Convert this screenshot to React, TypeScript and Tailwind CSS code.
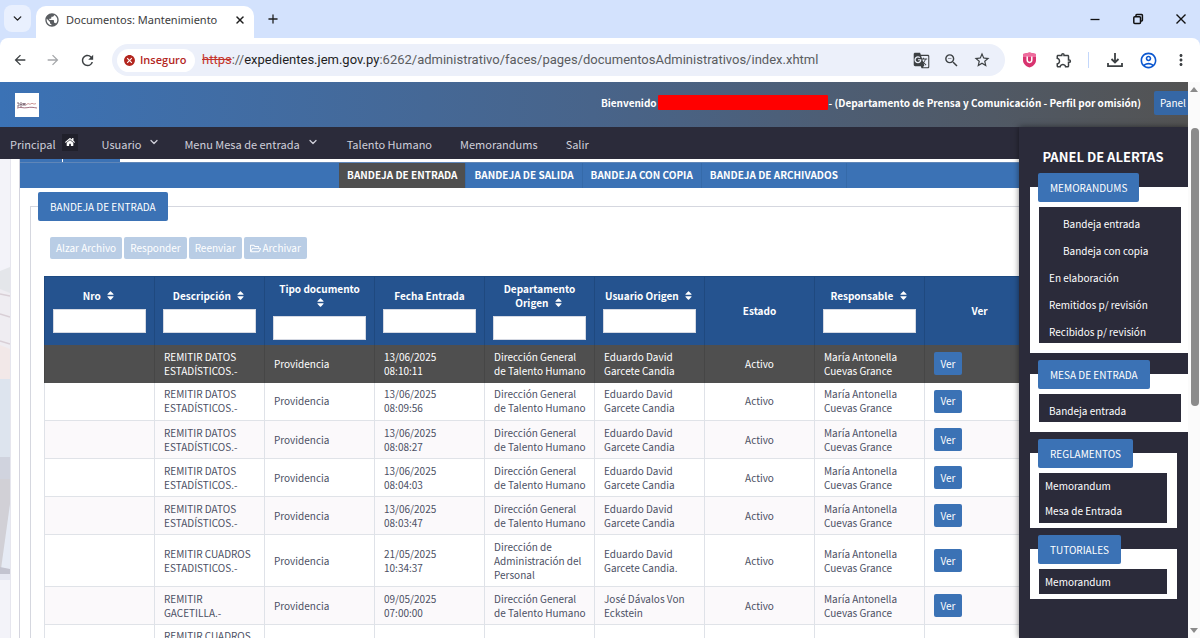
import type { ReactNode } from "react";
import { FaHome, FaRegFolderOpen, FaSort } from "react-icons/fa";
import {
  MdArrowBack,
  MdArrowForward,
  MdCancel,
  MdGTranslate,
  MdMoreVert,
  MdOutlineAccountCircle,
  MdOutlineExtension,
  MdOutlineStarBorder,
  MdPublic,
  MdRefresh,
  MdZoomOut,
} from "react-icons/md";
import { ChevronDown, Plus, X } from "lucide-react";

type Documento = {
  descripcion: string;
  fecha: string;
  hora: string;
  departamento: string;
  usuario: string;
};

type Columna = {
  titulo: string;
  orden?: boolean;
  filtro?: boolean;
};

const columnas: Columna[] = [
  { titulo: "Nro", orden: true, filtro: true },
  { titulo: "Descripción", orden: true, filtro: true },
  { titulo: "Tipo documento", orden: true, filtro: true },
  { titulo: "Fecha Entrada", filtro: true },
  { titulo: "Departamento Origen", orden: true, filtro: true },
  { titulo: "Usuario Origen", orden: true, filtro: true },
  { titulo: "Estado" },
  { titulo: "Responsable", orden: true, filtro: true },
  { titulo: "Ver" },
];

const datos = "REMITIR DATOS ESTADÍSTICOS.-";
const talento = "Dirección General de Talento Humano";
const eduardo = "Eduardo David Garcete Candia";

const documentos: Documento[] = [
  { descripcion: datos, fecha: "13/06/2025", hora: "08:10:11", departamento: talento, usuario: eduardo },
  { descripcion: datos, fecha: "13/06/2025", hora: "08:09:56", departamento: talento, usuario: eduardo },
  { descripcion: datos, fecha: "13/06/2025", hora: "08:08:27", departamento: talento, usuario: eduardo },
  { descripcion: datos, fecha: "13/06/2025", hora: "08:04:03", departamento: talento, usuario: eduardo },
  { descripcion: datos, fecha: "13/06/2025", hora: "08:03:47", departamento: talento, usuario: eduardo },
  {
    descripcion: "REMITIR CUADROS ESTADISTICOS.-",
    fecha: "21/05/2025",
    hora: "10:34:37",
    departamento: "Dirección de Administración del Personal",
    usuario: "Eduardo David Garcete Candia.",
  },
  {
    descripcion: "REMITIR GACETILLA.-",
    fecha: "09/05/2025",
    hora: "07:00:00",
    departamento: talento,
    usuario: "José Dávalos Von Eckstein",
  },
];

const pestanas = ["BANDEJA DE ENTRADA", "BANDEJA DE SALIDA", "BANDEJA CON COPIA", "BANDEJA DE ARCHIVADOS"];

function TabStrip() {
  return (
    <div className="flex h-[38px] items-end bg-[#d3e2fd] pl-1 text-[#1f1f1f]">
      <button aria-label="Buscar pestañas" className="mb-1.5 flex h-[27px] w-[27px] items-center justify-center rounded-lg bg-[#e9f0fe]">
        <ChevronDown size={13} strokeWidth={2.5} />
      </button>
      <div className="ml-[5px] flex h-8 w-[218px] items-center rounded-t-[10px] bg-white pr-2 pb-1 pl-2">
        <MdPublic size={16} className="text-[#5a5d61]" />
        <span className="ml-1.5 flex-1 font-['Noto_Sans',sans-serif] text-[11px] leading-4 whitespace-nowrap text-[#3c3c3c]">
          Documentos: Mantenimiento
        </span>
        <button aria-label="Cerrar pestaña">
          <X size={12} strokeWidth={3} />
        </button>
      </div>
      <button aria-label="Nueva pestaña" className="mb-3 ml-3">
        <Plus size={14} strokeWidth={2.2} />
      </button>
      <div className="mb-[13px] ml-auto flex items-center gap-[31px] pr-[13px]">
        <button aria-label="Minimizar">
          <svg width="12" height="12" viewBox="0 0 12 12">
            <path d="M1.500 6.500h9" stroke="#111" strokeWidth="1.300" />
          </svg>
        </button>
        <button aria-label="Restaurar">
          <svg width="12" height="12" viewBox="0 0 12 12" fill="none" stroke="#111" strokeWidth="1.500">
            <rect x="1.800" y="3.700" width="6.700" height="6.700" rx="1" />
            <path d="M4 3.500V2.300a.7.700 0 0 1 .7-.7h5a.7.700 0 0 1 .7.700v5a.7.700 0 0 1-.7.700H8.700" />
          </svg>
        </button>
        <button aria-label="Cerrar">
          <svg width="12" height="12" viewBox="0 0 12 12">
            <path d="M1.500 1.500l9 9m0-9l-9 9" stroke="#111" strokeWidth="1.400" />
          </svg>
        </button>
      </div>
    </div>
  );
}

function AddressBar() {
  return (
    <div className="bg-[#d3e2fd]">
      <div className="flex h-11 items-center rounded-t-lg bg-white pr-2.5 pl-3 text-[#3c4043]">
        <button aria-label="Atrás">
          <MdArrowBack size={16} />
        </button>
        <button aria-label="Adelante" className="ml-[17px] text-[#a5a7aa]">
          <MdArrowForward size={16} />
        </button>
        <button aria-label="Recargar" className="ml-[18px]">
          <MdRefresh size={17} />
        </button>
        <div className="ml-4 flex h-8 flex-1 items-center rounded-full bg-[#ecf0fa] pr-3.5 pl-[5px]">
          <button className="flex h-[23px] w-[78px] items-center gap-1 rounded-full bg-white pl-1.5 font-['Open_Sans','Noto_Sans',sans-serif] text-[11px] font-semibold text-[#b3261e]">
            <MdCancel size={13} />
            Inseguro
          </button>
          <span className="ml-[7px] flex-1 font-[Roboto,sans-serif] text-[13px] leading-5 whitespace-nowrap text-[#5a5c60]">
            <span className="text-[#c5352c] line-through">https</span>://
            <span className="text-[#1f1f1f]">expedientes.jem.gov.py</span>
            :6262/administrativo/faces/pages/documentosAdministrativos/index.xhtml
          </span>
          <div className="flex items-center gap-[13px]">
            <button aria-label="Traducir">
              <MdGTranslate size={17} />
            </button>
            <button aria-label="Zoom">
              <MdZoomOut size={17} />
            </button>
            <button aria-label="Favoritos">
              <MdOutlineStarBorder size={18} />
            </button>
          </div>
        </div>
        <div className="ml-[17px] flex items-center">
          <svg width="15" height="16" viewBox="0 0 15 16">
            <path d="M7.500.5L14 2v6c0 4-3 6.300-6.500 7.500C4 14.300 1 12 1 8V2z" fill="#d8336f" />
            <path d="M7.500.5L14 2v3H1V2z" fill="#ee6c9d" />
            <path d="M5.200 4.500v3.600a2.300 2.300 0 0 0 4.600 0V4.500" fill="none" stroke="#fff" strokeWidth="1.500" />
          </svg>
          <button aria-label="Extensiones" className="ml-[18px]">
            <MdOutlineExtension size={18} />
          </button>
          <span className="ml-[15px] h-4 w-px bg-[#c3d7fb]" />
          <button aria-label="Descargas" className="ml-4">
            <svg width="20" height="20" viewBox="0 0 20 20" fill="none" stroke="currentColor" strokeWidth="1.800">
              <path d="M10 3v9M6.500 9l3.500 3.500L13.500 9M3 13v3.200h14V13" />
            </svg>
          </button>
          <button aria-label="Perfil" className="ml-3.5 text-[#0b57d0]">
            <MdOutlineAccountCircle size={19} />
          </button>
          <button aria-label="Menú" className="ml-3.5">
            <MdMoreVert size={18} />
          </button>
        </div>
      </div>
    </div>
  );
}

function SiteHeader() {
  return (
    <header className="flex h-[45px] items-center overflow-hidden bg-linear-to-r from-[#3b72b5] via-[#48648a] to-[#535353] pl-[15px] text-[10px] font-bold text-white">
      <svg width="24" height="24" viewBox="0 0 24 24" className="shrink-0">
        <rect width="24" height="24" fill="#fff" />
        <path d="M2 10h2v3H2m3-3h2m-2 1.500h2M5 13h2m1 0v-3l1 2 1-2v3" stroke="#6b5060" strokeWidth=".8" fill="none" />
        <path d="M11 12l2-1.500 2 .8 2-1 2 .8 2-.5" stroke="#c99" strokeWidth="1" fill="none" />
        <path d="M2 15c4-1.500 6 .5 10-.3s6-.3 10 .3" stroke="#8b4f63" strokeWidth=".8" fill="none" />
      </svg>
      <div className="mb-1 ml-auto flex items-center whitespace-nowrap">
        <span>Bienvenido</span>
        <span className="mx-px h-[15px] w-[170px] rounded-[1px] bg-[#ff0000]" />
        <span>- (Departamento de Prensa y Comunicación - Perfil por omisión)</span>
      </div>
      <button className="mb-1 ml-[13px] h-6 w-[34px] shrink-0 overflow-hidden rounded-l-[2px] bg-[#3567a5] pl-1.5 text-left font-normal">
        Panel
      </button>
    </header>
  );
}

function NavBar() {
  return (
    <nav className="flex h-8 items-center gap-7 overflow-hidden bg-[#2b2b3a] pt-0.5 pl-2.5 text-[11px] leading-4 whitespace-nowrap text-[#d0d0da]">
      <a href="#principal" className="-mr-1 flex items-center gap-1.5">
        Principal
        <span className="mb-1 flex h-[17px] w-4 items-center justify-center bg-[#20202b] text-white">
          <FaHome size={10} />
        </span>
      </a>
      <a href="#usuario" className="flex items-center gap-[7px]">
        Usuario
        <ChevronDown size={12} strokeWidth={2.5} className="mb-1" />
      </a>
      <a href="#mesa" className="-ml-1 flex items-center gap-[7px]">
        Menu Mesa de entrada
        <ChevronDown size={12} strokeWidth={2.5} className="mb-1" />
      </a>
      <a href="#talento">Talento Humano</a>
      <a href="#memorandums">Memorandums</a>
      <a href="#salir">Salir</a>
    </nav>
  );
}

function ToolbarButton({ children }: { children: ReactNode }) {
  return (
    <button className="flex h-[22px] items-center gap-0.5 rounded-[2px] bg-[#b9cde5] px-1.5 text-[10px] leading-4 text-white">
      {children}
    </button>
  );
}

function Celda({ activa, centro, children }: { activa?: boolean; centro?: boolean; children?: ReactNode }) {
  return (
    <td
      className={`border-r py-1 ${activa ? "border-[#464646]" : "border-[#dfe2e8]"} ${centro ? "text-center" : "pr-1 pl-[9px]"}`}
    >
      {children}
    </td>
  );
}

function DocumentTable() {
  return (
    <table className="w-full table-fixed border-collapse text-[10px] leading-[14px]">
      <thead>
        <tr className="h-[68px] border-t border-[#1d4a82] bg-[#25538f] text-white">
          {columnas.map((col) => (
            <th key={col.titulo} className="border-x border-[#1f497f] px-2 py-[3px] font-bold">
              {col.titulo} {col.orden && <FaSort size={11} className="ml-0.5 inline align-[-1px]" />}
              {col.filtro && (
                <input
                  aria-label={`Filtrar por ${col.titulo}`}
                  className="mt-1.5 block h-6 w-full border border-[#d5d9e3] bg-white px-1 font-normal text-black"
                />
              )}
            </th>
          ))}
        </tr>
      </thead>
      <tbody>
        {documentos.map((doc, i) => (
          <tr
            key={i}
            className={`${i === 5 ? "h-[52px]" : "h-[38px]"} ${
              i === 0
                ? "bg-[#4f4f4f] text-white"
                : "border-b border-[#e0e3e8] text-[#4c5064] even:bg-white odd:bg-[#fbf9fb]"
            }`}
          >
            <td className={i === 0 ? "border-x border-[#464646]" : "border-x border-[#dfe2e8]"} />
            <Celda activa={i === 0}>{doc.descripcion}</Celda>
            <Celda activa={i === 0}>Providencia</Celda>
            <Celda activa={i === 0}>
              {doc.fecha}
              <br />
              {doc.hora}
            </Celda>
            <Celda activa={i === 0}>{doc.departamento}</Celda>
            <Celda activa={i === 0}>{doc.usuario}</Celda>
            <Celda activa={i === 0} centro>
              Activo
            </Celda>
            <Celda activa={i === 0}>
              María Antonella
              <br />
              Cuevas Grance
            </Celda>
            <Celda activa={i === 0}>
              <button className="block h-[23px] w-7 rounded-[2px] bg-[#3b72b5] text-white">Ver</button>
            </Celda>
          </tr>
        ))}
        <tr className="h-[52px] align-top text-[#4c5064]">
          <td className="border-x border-[#dfe2e8]" />
          <Celda>REMITIR CUADROS</Celda>
          <Celda />
          <Celda />
          <Celda />
          <Celda />
          <Celda />
          <Celda />
          <Celda />
        </tr>
      </tbody>
    </table>
  );
}

function Leyenda({ children }: { children: ReactNode }) {
  return (
    <legend className="ml-[7px] h-[29px] rounded-[2px] bg-[#3b72b5] px-3 text-[10px] leading-[29px] whitespace-nowrap text-white">
      {children}
    </legend>
  );
}

function AlertPanel() {
  return (
    <aside className="z-10 w-[169px] shrink-0 bg-[#2b2b3a] pt-5 pl-[11px] text-[10px] text-white shadow-[0_0_6px_rgba(0,0,0,0.5)]">
      <h2 className="mb-1.5 pr-3 text-center text-[13px] leading-5 font-bold">PANEL DE ALERTAS</h2>
      <div className="flex flex-col gap-[7px]">
        <fieldset className="border border-white bg-white pt-[5px] pr-1.5 pb-[9px]">
          <Leyenda>MEMORANDUMS</Leyenda>
          <ul className="ml-2 h-[136px] bg-[#2b2b3a] pt-[3px] pl-2.5 leading-[27px]">
            <li className="pl-3.5"><a href="#entrada">Bandeja entrada</a></li>
            <li className="pl-3.5"><a href="#copia">Bandeja con copia</a></li>
            <li><a href="#elaboracion">En elaboración</a></li>
            <li><a href="#remitidos">Remitidos p/ revisión</a></li>
            <li><a href="#recibidos">Recibidos p/ revisión</a></li>
          </ul>
        </fieldset>
        <fieldset className="border border-white bg-white pt-[5px] pr-1.5 pb-[9px]">
          <Leyenda>MESA DE ENTRADA</Leyenda>
          <ul className="ml-2 h-7 bg-[#2b2b3a] pt-[3px] pl-2.5 leading-[27px]">
            <li><a href="#mesa-entrada">Bandeja entrada</a></li>
          </ul>
        </fieldset>
        <fieldset className="mr-[11px] border border-white bg-white pt-[5px] pr-[9px] pb-1">
          <Leyenda>REGLAMENTOS</Leyenda>
          <ul className="ml-2 bg-[#2b2b3a] pl-1.5 leading-[25px]">
            <li><a href="#reg-memo">Memorandum</a></li>
            <li><a href="#reg-mesa">Mesa de Entrada</a></li>
          </ul>
        </fieldset>
        <fieldset className="mr-[11px] border border-white bg-white pt-[5px] pr-[9px] pb-1">
          <Leyenda>TUTORIALES</Leyenda>
          <ul className="ml-2 bg-[#2b2b3a] pl-1.5 leading-[25px]">
            <li><a href="#tut-memo">Memorandum</a></li>
          </ul>
        </fieldset>
      </div>
    </aside>
  );
}

// borde visible de la foto de fondo
function FotoFondo() {
  return (
    <svg viewBox="0 0 10 479" preserveAspectRatio="none" className="h-full w-full">
      <rect width="10" height="479" fill="#f3f3f9" />
      <path d="M0 112l10-4v26H0z" fill="#e4e6ea" />
      <path d="M0 130l10 4v60l-10-8z" fill="#efedf2" />
      <path d="M0 135l10 2M0 155l10 3M0 182l10 3" stroke="#d9cfd6" strokeWidth="1.500" />
      <path d="M0 186l10 4v30H0z" fill="#f2e8e8" />
      <path d="M0 220h10v78H0z" fill="#dde4ee" />
      <path d="M0 298h10v22H0z" fill="#d0d3de" />
      <path d="M0 320h10v92H0z" fill="#d1d0d6" />
      <path d="M10 345v65H1z" fill="#e6ebf5" />
      <path d="M0 408l10 2v5H0z" fill="#c3c4d0" />
      <path d="M0 415h10v6H0z" fill="#e6e8f2" />
    </svg>
  );
}

function Scrollbar() {
  return (
    <div className="flex w-3 shrink-0 flex-col items-center bg-[#fbfbfb] py-[5px]">
      <svg width="8" height="5" viewBox="0 0 8 5">
        <path d="M4 0l4 5H0z" fill="#8b8b8b" />
      </svg>
      <span className="mt-9 ml-0.5 h-[51%] w-2 rounded-full bg-[#8b8b8b]" />
      <svg width="8" height="5" viewBox="0 0 8 5" className="mt-auto">
        <path d="M4 5L0 0h8z" fill="#8b8b8b" />
      </svg>
    </div>
  );
}

export default function App() {
  return (
    <div className="flex h-screen flex-col overflow-hidden bg-white">
      <TabStrip />
      <AddressBar />
      <div className="flex min-h-0 flex-1 font-['Noto_Sans_CJK_SC',sans-serif]">
        <div className="flex min-w-0 flex-1 flex-col overflow-hidden">
          <SiteHeader />
          <div className="flex min-h-0 flex-1">
            <div className="flex min-w-0 flex-1 flex-col overflow-hidden">
              <NavBar />
              <div className="flex min-h-0 flex-1">
                <div className="w-[11px] shrink-0 border-r border-[#e6e6ee]">
                  <FotoFondo />
                </div>
                <main className="ml-2 min-w-0 flex-1 overflow-hidden border-l border-[#d4d4de]">
                  <div className="h-[3px] w-[100px] bg-[#3b72b5] pl-[42px]">
                    <div className="h-full w-px bg-white" />
                  </div>
                  <div role="tablist" className="-mr-[147px] flex h-[26px] justify-center border-t border-[#5f86b8] bg-[#3b72b5] text-[10px] leading-4 font-bold text-white">
                    {pestanas.map((p, i) => (
                      <button
                        key={p}
                        role="tab"
                        aria-selected={i === 0}
                        className={`border-r border-[#356aa9] px-2 pb-px ${i === 0 ? "bg-[#4f4f4f]" : ""}`}
                      >
                        {p}
                      </button>
                    ))}
                  </div>
                  <fieldset className="mt-1 -mr-[137px] ml-2.5 min-w-0 border border-[#d5d7df]">
                    <Leyenda>BANDEJA DE ENTRADA</Leyenda>
                    <div className="mt-4 ml-[19px] flex gap-0.5">
                      <ToolbarButton>Alzar Archivo</ToolbarButton>
                      <ToolbarButton>Responder</ToolbarButton>
                      <ToolbarButton>Reenviar</ToolbarButton>
                      <ToolbarButton>
                        <FaRegFolderOpen size={11} />
                        Archivar
                      </ToolbarButton>
                    </div>
                    <div className="mt-[17px] mr-[120px] ml-[13px]">
                      <DocumentTable />
                    </div>
                  </fieldset>
                </main>
              </div>
            </div>
            <AlertPanel />
          </div>
        </div>
        <Scrollbar />
      </div>
    </div>
  );
}
